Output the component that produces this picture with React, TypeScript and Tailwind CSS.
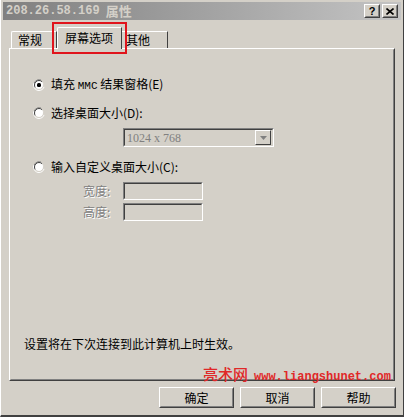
import React from "react";

const cjk = { fontFamily: '"Noto Sans CJK SC", "Noto Sans", sans-serif' };
const mono = { fontFamily: '"Liberation Mono", "DejaVu Sans Mono", monospace' };

// Win2000 style radio drawn as svg
const Radio = ({ checked }: { checked?: boolean }) => (
    <svg width="12" height="12" viewBox="0 0 12 12" className="shrink-0">
        <path d="M1 8 A5.5 5.5 0 0 1 8 1" fill="none" stroke="#808080" strokeWidth="1" />
        <circle cx="6" cy="6" r="5.5" fill="none" stroke="#ffffff" strokeWidth="1" strokeDasharray="17 18" strokeDashoffset="-2" />
        <circle cx="6" cy="6" r="4.5" fill="#ffffff" stroke="#404040" strokeWidth="1" strokeDasharray="13 15" strokeDashoffset="-11" />
        <circle cx="6" cy="6" r="4.5" fill="none" stroke="#d4d0c8" strokeWidth="1" strokeDasharray="14 15" strokeDashoffset="3" />
        {checked ? <rect x="4" y="4" width="4" height="4" rx="1.5" fill="#000000" /> : null}
    </svg>
);

const Sunken = ({ className, children }: { className: string; children?: React.ReactNode }) => (
    <div className={`border border-t-[#808080] border-l-[#808080] border-b-white border-r-white ${className}`}>
        <div className="h-full w-full border border-t-[#404040] border-l-[#404040] border-b-[#d4d0c8] border-r-[#d4d0c8] flex items-center">
            {children}
        </div>
    </div>
);

const DlgButton = ({ label }: { label: string }) => (
    <div className="w-[75px] h-[21px] border border-t-white border-l-white border-b-[#404040] border-r-[#404040]">
        <div className="h-full w-full border border-transparent border-b-[#808080] border-r-[#808080] flex items-center justify-center text-[12px] text-black" style={cjk}>
            {label}
        </div>
    </div>
);

const CaptionButton = ({ children }: { children: React.ReactNode }) => (
    <div className="w-[16px] h-[14px] bg-[#d4d0c8] border border-t-white border-l-white border-b-[#404040] border-r-[#404040]">
        <div className="h-full w-full border border-transparent border-b-[#808080] border-r-[#808080] flex items-center justify-center">
            {children}
        </div>
    </div>
);

export default function App() {
    return (
        <div className="w-[404px] h-[417px] bg-[#d4d0c8] flex flex-col relative border-l border-white border-r border-r-[#404040] border-b-2 border-b-[#404040] overflow-hidden" style={cjk}>
            {/* title bar */}
            <div className="mt-[2px] mx-[2px] h-[18px] bg-gradient-to-r from-[#808080] to-[#c4c4c4] flex items-center justify-between pl-[3px] pr-[3px]">
                <div className="flex items-center gap-[6px] text-[#d4d0c8] font-bold">
                    <span className="text-[12px]" style={mono}>208.26.58.169</span>
                    <span className="text-[13px]" style={cjk}>属性</span>
                </div>
                <div className="flex items-center gap-[2px]">
                    <CaptionButton>
                        <span className="text-[11px] font-bold leading-none text-black" style={{ fontFamily: '"Liberation Sans", sans-serif' }}>?</span>
                    </CaptionButton>
                    <CaptionButton>
                        <svg width="8" height="7" viewBox="0 0 8 7">
                            <path d="M0.5 0.5 L7.5 6.5 M7.5 0.5 L0.5 6.5" stroke="#000" strokeWidth="1.6" />
                        </svg>
                    </CaptionButton>
                </div>
            </div>

            {/* tabs */}
            <div className="mt-[7px] h-[21px] flex items-end pl-[10px] relative z-10">
                <div className="w-[46px] h-[17px] border border-b-0 border-t-white border-l-white border-r-[#404040] rounded-tl-[2px] flex items-center pl-[6px] text-[12px] text-black">
                    常规
                </div>
                <div className="w-[65px] h-[22px] mb-[-1px] bg-[#d4d0c8] border border-b-0 border-t-white border-l-white border-r-[#404040] rounded-tl-[2px] flex items-center pl-[7px] pb-[2px] text-[12px] text-black">
                    屏幕选项
                </div>
                <div className="w-[46px] h-[17px] border border-b-0 border-t-white border-l-0 border-r-[#404040] flex items-center pl-[4px] text-[12px] text-black">
                    其他
                </div>
            </div>

            {/* panel */}
            <div className="ml-[8px] mr-[8px] h-[333px] border border-t-white border-l-white border-b-[#404040] border-r-[#404040]">
                <div className="h-full w-full border border-transparent border-b-[#808080] border-r-[#808080] flex flex-col text-[12px] text-black">
                    <div className="mt-[27px] ml-[22px] h-[16px] flex items-center gap-[6px]">
                        <Radio checked />
                        <span>
                            填充 <span style={mono} className="text-[11px]">MMC</span> 结果窗格(E)
                        </span>
                    </div>
                    <div className="mt-[12px] ml-[22px] h-[16px] flex items-center gap-[6px]">
                        <Radio />
                        <span>选择桌面大小(D):</span>
                    </div>
                    <Sunken className="mt-[7px] ml-[112px] w-[151px] h-[19px]">
                        <span className="flex-1 pl-[2px] text-[12px] text-[#808080]" style={{ fontFamily: '"Liberation Serif", serif' }}>
                            1024 x 768
                        </span>
                        <div className="w-[16px] h-[15px] mr-[1px] border border-t-white border-l-white border-b-[#404040] border-r-[#404040] flex items-center justify-center">
                            <svg width="7" height="4" viewBox="0 0 7 4">
                                <path d="M0 0 H7 L3.5 4 Z" fill="#808080" />
                            </svg>
                        </div>
                    </Sunken>
                    <div className="mt-[12px] ml-[22px] h-[16px] flex items-center gap-[6px]">
                        <Radio />
                        <span>输入自定义桌面大小(C):</span>
                    </div>
                    <div className="mt-[7px] flex items-center">
                        <span className="ml-[72px] w-[40px] text-[#808080] [text-shadow:1px_1px_0_#ffffff]">宽度:</span>
                        <Sunken className="w-[80px] h-[18px]" />
                    </div>
                    <div className="mt-[3px] flex items-center">
                        <span className="ml-[72px] w-[40px] text-[#808080] [text-shadow:1px_1px_0_#ffffff]">高度:</span>
                        <Sunken className="w-[80px] h-[18px]" />
                    </div>
                    <div className="mt-auto mb-[27px] ml-[13px] h-[16px] flex items-center">
                        设置将在下次连接到此计算机上时生效。
                    </div>
                </div>
            </div>

            {/* buttons */}
            <div className="mt-[6px] flex justify-end gap-[6px] pr-[7px]">
                <DlgButton label="确定" />
                <DlgButton label="取消" />
                <DlgButton label="帮助" />
            </div>

            {/* red highlight around the selected tab */}
            <div className="absolute left-[51px] top-[22px] w-[75px] h-[32px] border-2 border-[#e0141c] z-20 pointer-events-none" />

            {/* watermark */}
            <div className="absolute left-[202px] top-[363px] flex items-baseline gap-[6px] text-[#e02828] z-20 pointer-events-none">
                <span className="text-[15px] font-medium" style={cjk}>亮术网</span>
                <span className="text-[12px] font-bold" style={{ fontFamily: '"Liberation Mono", "Courier New", monospace' }}>www.liangshunet.com</span>
            </div>
        </div>
    );
}
